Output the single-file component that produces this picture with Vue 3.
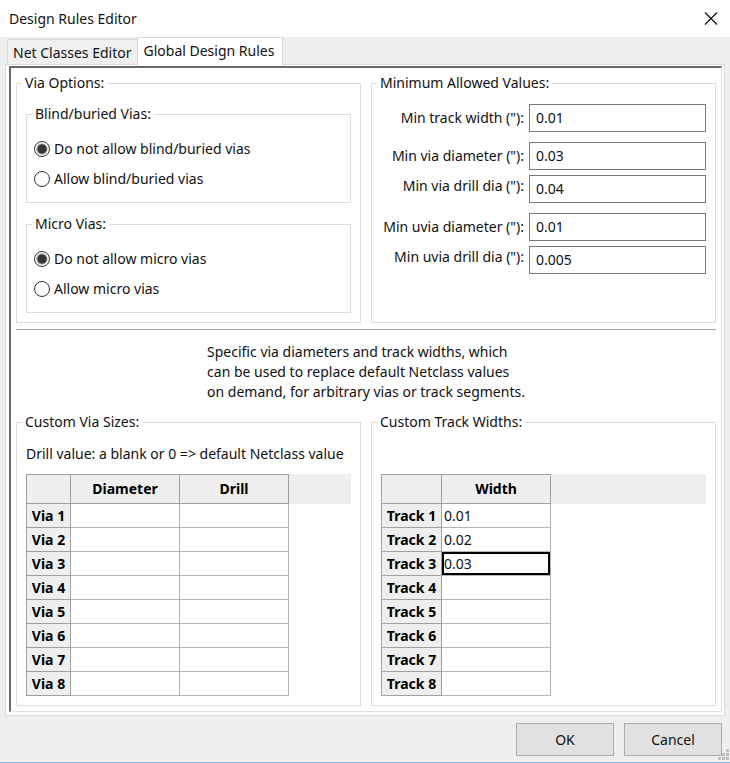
<script setup>
import { ref } from 'vue'

const tabs = ['Net Classes Editor', 'Global Design Rules']
const activeTab = ref('Global Design Rules')

const viaGroups = [
  {
    name: 'blind',
    title: 'Blind/buried Vias:',
    options: ['Do not allow blind/buried vias', 'Allow blind/buried vias'],
  },
  {
    name: 'micro',
    title: 'Micro Vias:',
    options: ['Do not allow micro vias', 'Allow micro vias'],
  },
]
const viaChoice = ref({ blind: 0, micro: 0 })

const minimums = ref([
  [{ id: 'track-width', label: 'Min track width ("):', value: '0.01' }],
  [
    { id: 'via-diameter', label: 'Min via diameter ("):', value: '0.03' },
    { id: 'via-drill', label: 'Min via drill dia ("):', value: '0.04' },
  ],
  [
    { id: 'uvia-diameter', label: 'Min uvia diameter ("):', value: '0.01' },
    { id: 'uvia-drill', label: 'Min uvia drill dia ("):', value: '0.005' },
  ],
])

const trackWidths = ref(['0.01', '0.02', '0.03', '', '', '', '', ''])
const selectedTrack = ref(2)
</script>

<template>
  <div class="dialog">
    <header class="titlebar">
      <h1>Design Rules Editor</h1>
      <button class="close" type="button" aria-label="Close">
        <svg width="14" height="14" viewBox="0 0 14 14">
          <path d="M1 0.5 L13 12.5 M13 0.5 L1 12.5" stroke="#111" stroke-width="1.2" fill="none" />
        </svg>
      </button>
    </header>

    <nav class="tabs" role="tablist">
      <button
        v-for="tab in tabs"
        :key="tab"
        type="button"
        role="tab"
        class="tab"
        :class="{ active: tab === activeTab }"
        :aria-selected="tab === activeTab"
        @click="activeTab = tab"
      >{{ tab }}</button>
    </nav>

    <main class="page">
      <div class="sunken">
        <div class="columns">
          <fieldset class="group options">
            <legend>Via Options:</legend>
            <fieldset v-for="group in viaGroups" :key="group.name" class="group choices">
              <legend>{{ group.title }}</legend>
              <label v-for="(option, i) in group.options" :key="option" class="choice">
                <input v-model="viaChoice[group.name]" type="radio" :name="group.name" :value="i" />
                <span>{{ option }}</span>
              </label>
            </fieldset>
          </fieldset>

          <fieldset class="group minimums">
            <legend>Minimum Allowed Values:</legend>
            <div v-for="(set, s) in minimums" :key="s" class="field-set">
              <div v-for="field in set" :key="field.id" class="field">
                <label :for="field.id">{{ field.label }}</label>
                <input :id="field.id" v-model="field.value" type="text" />
              </div>
            </div>
          </fieldset>
        </div>

        <hr />

        <p class="hint">
          Specific via diameters and track widths, which<br />
          can be used to replace default Netclass values<br />
          on demand, for arbitrary vias or track segments.
        </p>

        <div class="columns">
          <fieldset class="group custom">
            <legend>Custom Via Sizes:</legend>
            <p class="note">Drill value: a blank or 0 =&gt; default Netclass value</p>
            <div class="grid">
              <table>
                <thead>
                  <tr>
                    <th class="via-head"></th>
                    <th class="data-col">Diameter</th>
                    <th class="data-col">Drill</th>
                  </tr>
                </thead>
                <tbody>
                  <tr v-for="n in 8" :key="n">
                    <th>Via {{ n }}</th>
                    <td></td>
                    <td></td>
                  </tr>
                </tbody>
              </table>
              <div class="filler"></div>
            </div>
          </fieldset>

          <fieldset class="group custom">
            <legend>Custom Track Widths:</legend>
            <p class="note"></p>
            <div class="grid">
              <table>
                <thead>
                  <tr>
                    <th class="track-head"></th>
                    <th class="data-col">Width</th>
                  </tr>
                </thead>
                <tbody>
                  <tr v-for="(width, i) in trackWidths" :key="i">
                    <th>Track {{ i + 1 }}</th>
                    <td @click="selectedTrack = i">
                      <span class="value" :class="{ selected: i === selectedTrack }">{{ width }}</span>
                    </td>
                  </tr>
                </tbody>
              </table>
              <div class="filler"></div>
            </div>
          </fieldset>
        </div>
      </div>
    </main>

    <footer class="actions">
      <button type="button">OK</button>
      <button type="button">Cancel</button>
      <svg class="grip" width="12" height="12" viewBox="0 0 12 12" aria-hidden="true">
        <path
          d="M8 0h3v3h-3z M4 4h3v3h-3z M8 4h3v3h-3z M0 8h3v3h-3z M4 8h3v3h-3z M8 8h3v3h-3z"
          fill="#bfbfbf"
        />
      </svg>
    </footer>
  </div>
</template>

<style>
body {
  margin: 0;
  background: #efefef;
}
</style>

<style scoped>
.dialog {
  box-sizing: border-box;
  min-height: 100vh;
  display: flex;
  flex-direction: column;
  background: #efefef;
  border-bottom: 1px solid #7fb8ea;
  color: #111;
  font-family: "Noto Sans", "Open Sans", sans-serif;
  font-size: 14px;
  line-height: 20px;
}

button,
input {
  font: inherit;
  color: inherit;
}

.titlebar {
  display: flex;
  align-items: center;
  justify-content: space-between;
  height: 37px;
  padding: 0 12px 0 9px;
  background: #fff;
}

h1 {
  margin: 0;
  font-size: 14px;
  font-weight: 400;
}

.close {
  display: flex;
  padding: 0;
  border: 0;
  background: none;
}

.tabs {
  display: flex;
  align-items: flex-end;
  height: 28px;
  padding-left: 7px;
  z-index: 1;
}

.tab {
  height: 26px;
  padding: 2px 5px 0;
  border: 1px solid #d9d9d9;
  border-right: 0;
  background: #f0f0f0;
  white-space: nowrap;
}

.tab.active {
  height: 28px;
  padding: 0 8px 2px 6px;
  border-right: 1px solid #d9d9d9;
  border-bottom: 0;
  background: #fff;
}

.page {
  margin: -1px 5px 0;
  padding: 1px 2px 3px 3px;
  border: 1px solid #dadada;
  background: #fff;
}

.sunken {
  padding: 5px;
  border: 2px solid #696969;
  border-right: 1px solid #e0e0e0;
  border-bottom: 1px solid #e0e0e0;
}

.columns {
  display: grid;
  grid-template-columns: 1fr 1fr;
  gap: 10px;
}

.group {
  min-width: 0;
  margin: 0;
  padding: 11px 9px 9px;
  border: 1px solid #dcdcdc;
}

.custom {
  padding-top: 12px;
}

legend {
  margin-left: -4px;
  padding: 0 3px;
}

.choices {
  padding: 10px 7px 8px;
}

.choices legend {
  margin-left: -2px;
}

.choices + .choices {
  margin-top: 11px;
}

.choice {
  display: flex;
  align-items: center;
  gap: 4px;
  height: 30px;
}

.choice input {
  appearance: none;
  box-sizing: border-box;
  width: 16px;
  height: 16px;
  margin: 0;
  border: 1px solid #333;
  border-radius: 50%;
  background: #fff;
}

.choice input:checked {
  background: radial-gradient(circle, #333 0 4px, #fff 6px);
}

.field-set {
  display: grid;
  gap: 5px;
  margin-bottom: 10px;
}

.field {
  display: grid;
  grid-template-columns: 1fr 177px;
  gap: 5px;
  align-items: start;
}

.field label {
  line-height: 22px;
  text-align: right;
  white-space: nowrap;
}

.field:first-child label {
  line-height: 28px;
}

.field input {
  box-sizing: border-box;
  width: 100%;
  height: 28px;
  padding: 0 6px 2px;
  border: 1px solid #7a7a7a;
  background: #fff;
}

hr {
  margin: 6px 0 0;
  border: 0;
  border-top: 1px solid #a0a0a0;
}

.hint {
  width: fit-content;
  margin: 12px auto 10px;
}

.note {
  height: 20px;
  margin: 0 0 10px;
  white-space: nowrap;
}

.grid {
  display: flex;
  align-items: flex-start;
}

.filler {
  flex: 1;
  height: 30px;
  background: #efefef;
}

table {
  border-collapse: separate;
  border-spacing: 0;
  border-top: 1px solid #a0a0a0;
  border-left: 1px solid #a0a0a0;
}

th,
td {
  box-sizing: border-box;
  height: 24px;
  padding: 0;
  border-right: 1px solid #b4b4b4;
  border-bottom: 1px solid #b4b4b4;
  white-space: nowrap;
}

th {
  border-color: #a0a0a0;
  background: #efefef;
  color: #000;
  font-weight: 700;
}

thead th {
  height: 29px;
}

.via-head {
  width: 44px;
}

.track-head {
  width: 60px;
}

.data-col {
  width: 109px;
}

.value {
  box-sizing: border-box;
  display: block;
  height: 23px;
  padding: 2px;
}

.value.selected {
  padding: 0;
  border: 2px solid #000;
}

.actions {
  position: relative;
  display: flex;
  justify-content: flex-end;
  gap: 10px;
  padding: 7px 8px 6px;
}

.actions button {
  width: 98px;
  height: 33px;
  padding: 0;
  border: 1px solid #adadad;
  background: #e1e1e1;
}

.grip {
  position: absolute;
  right: 0;
  bottom: 1px;
}
</style>
